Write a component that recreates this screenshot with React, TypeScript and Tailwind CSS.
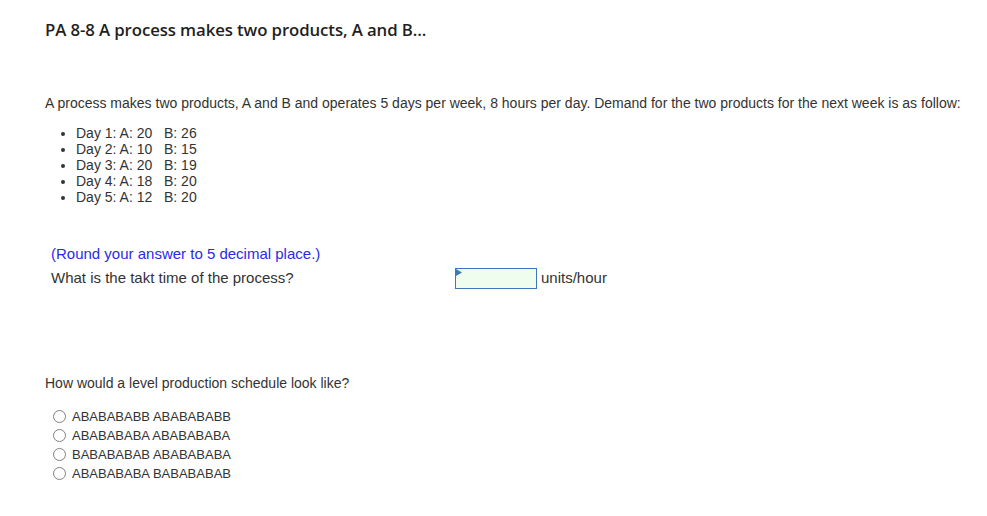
import React from "react";

const DAYS = [
  ["1", "20", "26"],
  ["2", "10", "15"],
  ["3", "20", "19"],
  ["4", "18", "20"],
  ["5", "12", "20"],
];

const OPTIONS = [
  "ABABABABB ABABABABB",
  "ABABABABA ABABABABA",
  "BABABABAB ABABABABA",
  "ABABABABA BABABABAB",
];

export default function App() {
  return (
    <div className="w-[987px] h-[516px] bg-white text-[#333] font-['Liberation_Sans',Arial,sans-serif] overflow-hidden">
      <div className="pl-[45px] pt-[19px]">
        <h1 className="font-['Open_Sans',sans-serif] font-semibold text-[16.8px] leading-[22px] text-[#1f1f1f] tracking-[-0.1px]">
          PA 8-8 A process makes two products, A and B...
        </h1>

        <p className="mt-[54px] text-[14px] leading-[16px]">
          A process makes two products, A and B and operates 5 days per week, 8 hours per day. Demand for the two products for the next week is as follow:
        </p>

        <ul className="mt-[14px] pl-[31px] list-disc text-[14px] leading-[16px]">
          {DAYS.map(([d, a, b]) => (
            <li key={d}>
              Day {d}: A: {a}&nbsp;&nbsp; B: {b}
            </li>
          ))}
        </ul>

        <div className="mt-[39px] pl-[6px] text-[15px]">
          <p className="leading-[20px] text-[#2a2aeb]">(Round your answer to 5 decimal place.)</p>
          <div className="flex items-center mt-[3px] h-[22px]">
            <span className="w-[404px]">What is the takt time of the process?</span>
            <div className="relative w-[82px] h-[21px] border border-[#3f77bd] bg-[#effdef]">
              <svg className="absolute left-0 top-0" width="6" height="7" viewBox="0 0 6 7">
                <path d="M0 0 L6 3.5 L0 7 Z" fill="#3f77bd" />
              </svg>
            </div>
            <span className="ml-[4px]">units/hour</span>
          </div>
        </div>

        <p className="mt-[86px] text-[14px] leading-[16px]">How would a level production schedule look like?</p>

        <div className="mt-[16px] pl-[8px] flex flex-col text-[13px]">
          {OPTIONS.map((o) => (
            <label key={o} className="flex items-center h-[19px]">
              <span className="w-[13px] h-[13px] rounded-full border border-[#808080] bg-white" />
              <span className="ml-[6px]">{o}</span>
            </label>
          ))}
        </div>
      </div>
    </div>
  );
}
